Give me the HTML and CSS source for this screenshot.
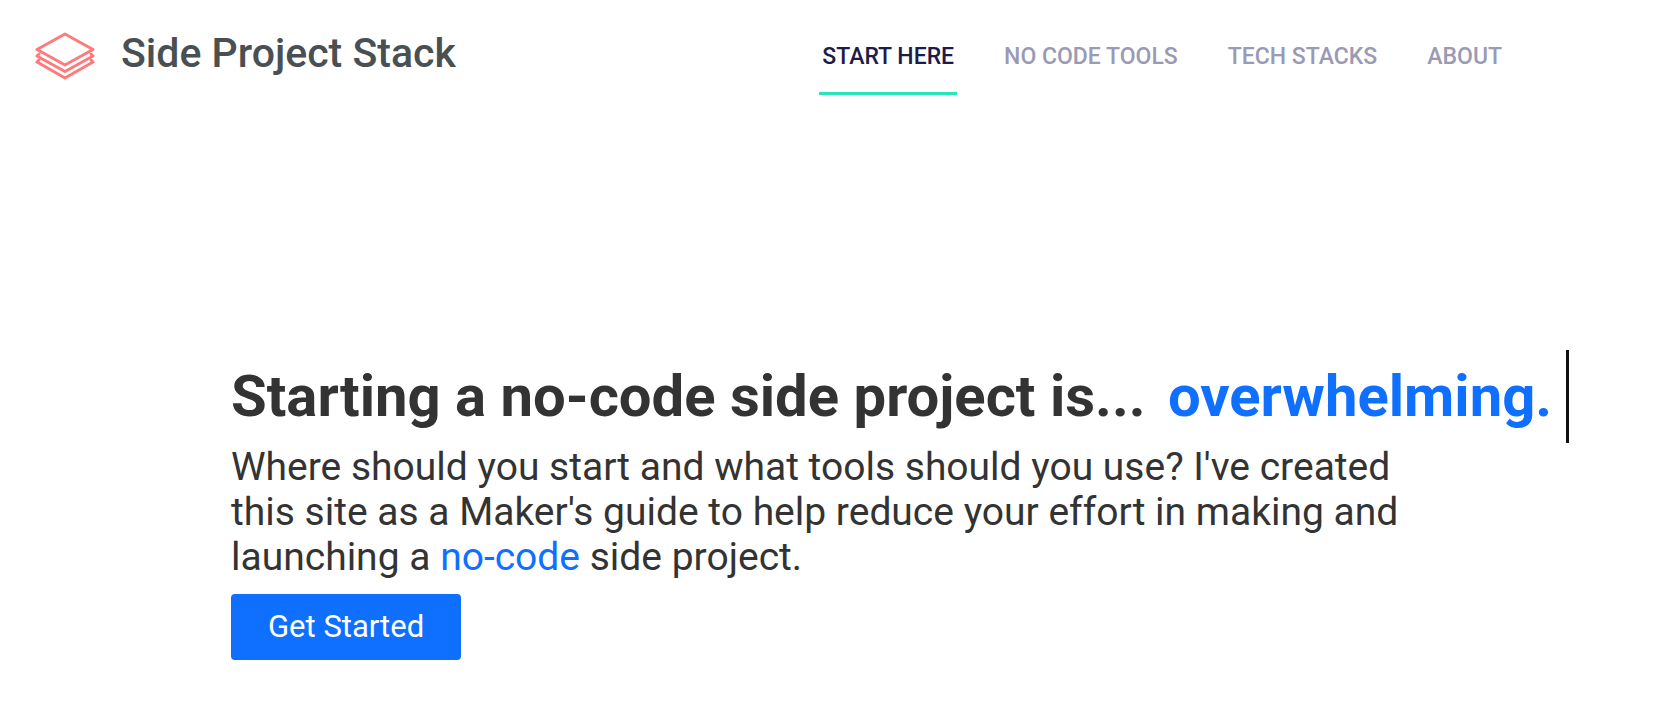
FILE: index.html
```html
<!DOCTYPE html>
<html lang="en">
<head>
<meta charset="utf-8">
<meta name="viewport" content="width=device-width, initial-scale=1">
<title>Side Project Stack</title>
<link rel="stylesheet" href="styles.css">
</head>
<body>
<header class="header">
  <a class="brand" href="#">
    <svg class="brand-logo" viewBox="0 0 60 48" fill="none" stroke="#ff7a7a" stroke-width="3" stroke-linejoin="round" stroke-linecap="round" aria-hidden="true">
      <path d="M30 2 58 17.500 30 33 2 17.500Z"/>
      <path d="M4 22 2 24 30 39.500 58 24 56 22"/>
      <path d="M4 28 2 30 30 46 58 30 56 28"/>
    </svg>
    <span class="brand-name">Side Project Stack</span>
  </a>
  <nav class="nav">
    <a class="nav-link nav-link-active" href="#" aria-current="page">START HERE</a>
    <a class="nav-link" href="#">NO CODE TOOLS</a>
    <a class="nav-link" href="#">TECH STACKS</a>
    <a class="nav-link" href="#">ABOUT</a>
  </nav>
</header>
<main class="hero">
  <h1 class="hero-title">Starting a no-code side project is... <span class="typed">overwhelming.</span></h1>
  <p class="hero-text">Where should you start and what tools should you use? I've created this site as a Maker's guide to help reduce your effort in making and launching a <a class="hero-link" href="#">no-code</a> side project.</p>
  <button class="cta" type="button">Get Started</button>
</main>
</body>
</html>
```
FILE: styles.css
```css
* { box-sizing: border-box; }

body {
  margin: 0;
  background: #fff;
  color: #333;
  font-family: Roboto, "Liberation Sans", sans-serif;
}

a { text-decoration: none; }

.header {
  display: flex;
  justify-content: space-between;
  align-items: flex-start;
  padding: 24px 154px 0 35px;
}

.brand {
  display: flex;
  align-items: center;
  gap: 26px;
  color: #495053;
}

.brand-logo {
  width: 60px;
  height: 48px;
  margin-top: 6px;
}

.brand-name {
  font-size: 41px;
  line-height: 58px;
  font-weight: 500;
}

.nav {
  display: flex;
  gap: 44px;
}

.nav-link {
  padding: 17px 3px 19px;
  border-bottom: 3px solid transparent;
  color: #9a9ab5;
  font-size: 23px;
  line-height: 32px;
  font-weight: 500;
}

.nav-link-active {
  border-color: #2ae5b9;
  color: #1c1b4b;
}

.hero {
  padding: 255px 64px 64px 231px;
}

.hero-title {
  margin: 0;
  font-size: 58px;
  line-height: 93px;
  font-weight: 700;
}

.typed {
  display: inline-block;
  margin-left: 8px;
  padding-right: 14px;
  border-right: 3px solid #111;
  color: #0f6fff;
}

.hero-text {
  max-width: 1200px;
  margin: 2px 0 14px;
  font-size: 39px;
  line-height: 45px;
}

.hero-link { color: #0f6fff; }

.cta {
  padding: 13px 37px;
  border: 0;
  border-radius: 4px;
  background: #0f6fff;
  color: #fff;
  font-family: inherit;
  font-size: 31px;
  line-height: 40px;
}
```
